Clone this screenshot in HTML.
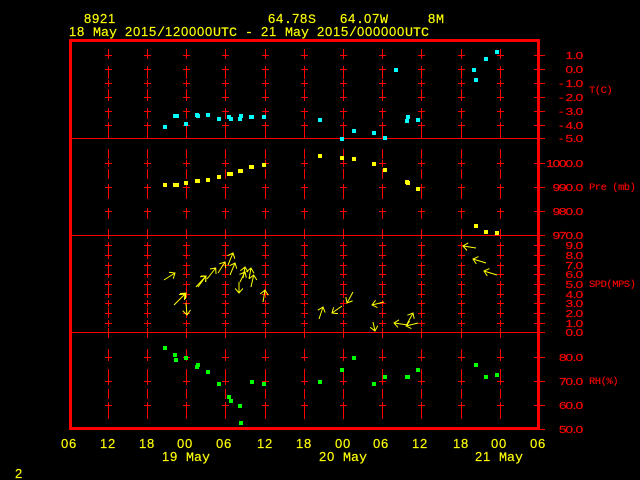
<!DOCTYPE html>
<html>
<head>
<meta charset="utf-8">
<title>8921</title>
<style>
html,body{margin:0;padding:0;background:#000;width:640px;height:480px;overflow:hidden}
svg{display:block;position:absolute;left:0;top:0}
text{font-family:"Liberation Mono",monospace}
.y text{fill:#ff0;stroke:#ff0;stroke-width:.15px;font-size:13.33px}
.s{font-family:"Liberation Sans",sans-serif;font-size:13px;letter-spacing:.77px}
.r text{fill:#f00;stroke:#f00;stroke-width:.15px;font-size:10px;font-family:"Liberation Sans",sans-serif}
.l text{fill:#f00;stroke:#f00;stroke-width:.12px;font-size:10.5px;letter-spacing:-.5px}
</style>
</head>
<body>
<svg width="640" height="480" viewBox="0 0 640 480" xmlns="http://www.w3.org/2000/svg">
<rect width="640" height="480" fill="#000"/>
<defs>
<path id="c" fill="none" stroke="#f00" stroke-width="1" shape-rendering="crispEdges" d="M.5 49V59M.5 69V79M.5 89V99M.5 109V119M.5 129V139M.5 149V159M.5 169V179M.5 189V199M.5 209V219M.5 229V239M.5 249V259M.5 268V278M.5 288V298M.5 308V318M.5 328V338M.5 349V359M.5 369V379M.5 389V399M.5 409V419
M-3 55.5H4M.5 52V59M-3 69.5H4M.5 66V73M-3 83.5H4M.5 80V87M-3 97.5H4M.5 94V101M-3 111.5H4M.5 108V115M-3 125.5H4M.5 122V129
M-3 163.5H4M.5 160V167M-3 187.5H4M.5 184V191M-3 211.5H4M.5 208V215
M-3 245.5H4M.5 242V249M-3 255.5H4M.5 252V259M-3 265.5H4M.5 262V269M-3 274.5H4M.5 271V278M-3 284.5H4M.5 281V288M-3 294.5H4M.5 291V298M-3 303.5H4M.5 300V307M-3 313.5H4M.5 310V317M-3 323.5H4M.5 320V327
M-3 357.5H4M.5 354V361M-3 381.5H4M.5 378V385M-3 405.5H4M.5 402V409"/>
</defs>
<use href="#c" x="108"/><use href="#c" x="147"/><use href="#c" x="186"/><use href="#c" x="225"/><use href="#c" x="265"/><use href="#c" x="304"/><use href="#c" x="343"/><use href="#c" x="382"/><use href="#c" x="421"/><use href="#c" x="461"/><use href="#c" x="500"/>

<path fill="none" stroke="#f00" stroke-width="1" shape-rendering="crispEdges" d="M72 138.5H545M72 235.5H545M72 332.5H545
M534 55.5H545M534 69.5H545M534 83.5H545M534 97.5H545M534 111.5H545M534 125.5H545M534 163.5H545M534 187.5H545M534 211.5H545M534 245.5H545M534 255.5H545M534 265.5H545M534 274.5H545M534 284.5H545M534 294.5H545M534 303.5H545M534 313.5H545M534 323.5H545M534 357.5H545M534 381.5H545M534 405.5H545M534 429.5H545"/>
<rect x="70.5" y="40.5" width="468" height="388" fill="none" stroke="#f00" stroke-width="3" shape-rendering="crispEdges"/>

<path fill="#0ff" shape-rendering="crispEdges" d="M163 125h4v4h-4zM173 114h4v4h-4zM175 114h4v4h-4zM184 122h4v4h-4zM195 113h4v4h-4zM196 114h4v4h-4zM206 113h4v4h-4zM217 117h4v4h-4zM227 115h4v4h-4zM229 117h4v4h-4zM238 117h4v4h-4zM239 114h4v4h-4zM249 115h4v4h-4zM250 115h4v4h-4zM262 115h4v4h-4zM318 118h4v4h-4zM340 137h4v4h-4zM352 129h4v4h-4zM372 131h4v4h-4zM383 136h4v4h-4zM394 68h4v4h-4zM405 119h4v4h-4zM406 115h4v4h-4zM416 118h4v4h-4zM472 68h4v4h-4zM474 78h4v4h-4zM484 57h4v4h-4zM495 50h4v4h-4z"/>
<path fill="#ff0" shape-rendering="crispEdges" d="M163 183h4v4h-4zM173 183h4v4h-4zM175 183h4v4h-4zM184 181h4v4h-4zM195 179h4v4h-4zM196 179h4v4h-4zM206 178h4v4h-4zM217 175h4v4h-4zM227 172h4v4h-4zM229 172h4v4h-4zM238 169h4v4h-4zM239 169h4v4h-4zM249 165h4v4h-4zM250 165h4v4h-4zM262 163h4v4h-4zM318 154h4v4h-4zM340 156h4v4h-4zM352 157h4v4h-4zM372 162h4v4h-4zM383 168h4v4h-4zM405 180h4v4h-4zM406 181h4v4h-4zM416 187h4v4h-4zM474 224h4v4h-4zM484 230h4v4h-4zM495 231h4v4h-4z"/>
<path fill="#0f0" shape-rendering="crispEdges" d="M163 346h4v4h-4zM173 353h4v4h-4zM174 358h4v4h-4zM184 356h4v4h-4zM195 365h4v4h-4zM196 363h4v4h-4zM206 370h4v4h-4zM217 382h4v4h-4zM227 395h4v4h-4zM229 399h4v4h-4zM238 404h4v4h-4zM239 421h4v4h-4zM250 380h4v4h-4zM262 382h4v4h-4zM318 380h4v4h-4zM340 368h4v4h-4zM352 356h4v4h-4zM372 382h4v4h-4zM383 375h4v4h-4zM405 375h4v4h-4zM406 375h4v4h-4zM416 368h4v4h-4zM474 363h4v4h-4zM484 375h4v4h-4zM495 373h4v4h-4z"/>

<path fill="none" stroke="#ff0" stroke-width="1" d="M164 280L175 273M169 272.3L175 273L173.2 278.7
M174 305L185 294M179 294.6L185 294L184.4 300
M176 303L186 293M180 293.6L186 293L185.4 299
M186 303L187 315M190.5 310L187 315L182.7 310.7
M196 287L206 276M200 276.8L206 276L205.8 282
M198 287L206 276M201 276L206 276L205.5 282
M207 279L215.7 268M210 269L215.7 268L216 274
M218 273L225 262M219.3 263.8L225 262L225.7 268
M228 265L233 253M227.6 255.7L233 253L234.8 258.7
M230 275L235 263M229.6 265.7L235 263L236.8 268.7
M239 282L239 293M242.9 288.4L239 293L235.1 288.4
M240 282L245 272M239.5 274.4L245 272L246.3 277.8
M243 278L245 267M240.4 270.8L245 267L248 272.2
M249 279L251 268M246.4 271.8L251 268L254 273.2
M251 287L253.7 275M248.9 278.9L253.7 275L256.8 280
M263 302L265 290M260.2 294L265 290L268.2 295.2
M319 319L323 307M317.8 310.2L323 307L325.2 312.6
M342 306L332 313M338 313.6L332 313L333.6 307.2
M353 292L347 303M352.6 300.9L347 303L345.8 297.1
M384 302L372 305M377.4 307.6L372 305L375.6 300.2
M373 322L375 331M377.8 325.7L375 331L370.2 327.3
M408 325L394 323M398 327.4L394 323L399 319.8
M418 323L406 326M411.4 328.6L406 326L409.6 321.2
M406 326L413 313M407.4 315.2L413 313L414.2 318.8
M476 248L463 246M467 250.5L463 246L468.2 242.9
M486 263L473 259M476.3 264L473 259L478.5 256.6
M497 275L484 271M487.3 276L484 271L489.5 268.6"/>

<g class="y">
<text x="84" y="23"><tspan class="s">8921</tspan></text>
<text x="268" y="23"><tspan class="s">64</tspan>.<tspan class="s">78</tspan>S</text>
<text x="340" y="23"><tspan class="s">64</tspan>.<tspan class="s">07</tspan>W</text>
<text x="428" y="23"><tspan class="s">8</tspan>M</text>
<text x="69" y="36"><tspan class="s">18</tspan> May <tspan class="s">2015</tspan>/<tspan class="s">120000</tspan>UTC - <tspan class="s">21</tspan> May <tspan class="s">2015</tspan>/<tspan class="s">000000</tspan>UTC</text>
<text x="61" y="448"><tspan class="s">06</tspan></text>
<text x="100" y="448"><tspan class="s">12</tspan></text>
<text x="139" y="448"><tspan class="s">18</tspan></text>
<text x="177" y="448"><tspan class="s">00</tspan></text>
<text x="216" y="448"><tspan class="s">06</tspan></text>
<text x="257" y="448"><tspan class="s">12</tspan></text>
<text x="296" y="448"><tspan class="s">18</tspan></text>
<text x="335" y="448"><tspan class="s">00</tspan></text>
<text x="373" y="448"><tspan class="s">06</tspan></text>
<text x="412" y="448"><tspan class="s">12</tspan></text>
<text x="453" y="448"><tspan class="s">18</tspan></text>
<text x="491" y="448"><tspan class="s">00</tspan></text>
<text x="530" y="448"><tspan class="s">06</tspan></text>
<text x="162" y="461"><tspan class="s">19</tspan> May</text>
<text x="319" y="461"><tspan class="s">20</tspan> May</text>
<text x="475" y="461"><tspan class="s">21</tspan> May</text>
<text x="15" y="478"><tspan class="s">2</tspan></text>
</g>

<g class="r">
<text transform="translate(583,59) scale(1.4,1)" x="-12.6 -7.4 -5.4">1.0</text>
<text transform="translate(583,73) scale(1.4,1)" x="-12.6 -7.4 -5.4">0.0</text>
<text transform="translate(583,87) scale(1.4,1)" x="-17.2 -12.6 -7.4 -5.4">-1.0</text>
<text transform="translate(583,101) scale(1.4,1)" x="-17.2 -12.6 -7.4 -5.4">-2.0</text>
<text transform="translate(583,115) scale(1.4,1)" x="-17.2 -12.6 -7.4 -5.4">-3.0</text>
<text transform="translate(583,129) scale(1.4,1)" x="-17.2 -12.6 -7.4 -5.4">-4.0</text>
<text transform="translate(583,142) scale(1.4,1)" x="-17.2 -12.6 -7.4 -5.4">-5.0</text>
<text transform="translate(583,167) scale(1.4,1)" x="-26.4 -21.8 -17.2 -12.6 -7.4 -5.4">1000.0</text>
<text transform="translate(583,191) scale(1.4,1)" x="-21.8 -17.2 -12.6 -7.4 -5.4">990.0</text>
<text transform="translate(583,215) scale(1.4,1)" x="-21.8 -17.2 -12.6 -7.4 -5.4">980.0</text>
<text transform="translate(583,239) scale(1.4,1)" x="-21.8 -17.2 -12.6 -7.4 -5.4">970.0</text>
<text transform="translate(583,249) scale(1.4,1)" x="-12.6 -7.4 -5.4">9.0</text>
<text transform="translate(583,259) scale(1.4,1)" x="-12.6 -7.4 -5.4">8.0</text>
<text transform="translate(583,269) scale(1.4,1)" x="-12.6 -7.4 -5.4">7.0</text>
<text transform="translate(583,278) scale(1.4,1)" x="-12.6 -7.4 -5.4">6.0</text>
<text transform="translate(583,288) scale(1.4,1)" x="-12.6 -7.4 -5.4">5.0</text>
<text transform="translate(583,298) scale(1.4,1)" x="-12.6 -7.4 -5.4">4.0</text>
<text transform="translate(583,307) scale(1.4,1)" x="-12.6 -7.4 -5.4">3.0</text>
<text transform="translate(583,317) scale(1.4,1)" x="-12.6 -7.4 -5.4">2.0</text>
<text transform="translate(583,327) scale(1.4,1)" x="-12.6 -7.4 -5.4">1.0</text>
<text transform="translate(583,336) scale(1.4,1)" x="-12.6 -7.4 -5.4">0.0</text>
<text transform="translate(583,361) scale(1.4,1)" x="-17.2 -12.6 -7.4 -5.4">80.0</text>
<text transform="translate(583,385) scale(1.4,1)" x="-17.2 -12.6 -7.4 -5.4">70.0</text>
<text transform="translate(583,409) scale(1.4,1)" x="-17.2 -12.6 -7.4 -5.4">60.0</text>
<text transform="translate(583,433) scale(1.4,1)" x="-17.2 -12.6 -7.4 -5.4">50.0</text>
</g>
<g class="l">
<text x="589" y="93">T(C)</text>
<text x="589" y="190">Pre (mb)</text>
<text x="589" y="287">SPD(MPS)</text>
<text x="589" y="384">RH(%)</text>
</g>
</svg>
</body>
</html>
